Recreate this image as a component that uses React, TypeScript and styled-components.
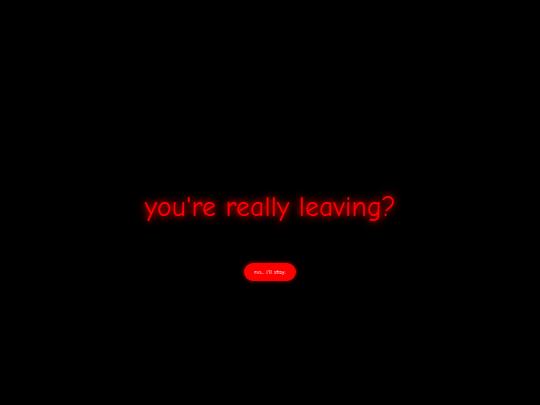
import styled, { createGlobalStyle } from 'styled-components'

const GlobalStyle = createGlobalStyle`
  html, body {
    margin: 0;
    padding: 0;
    background: #000;
  }
`

const Page = styled.div`
  width: 540px;
  height: 405px;
  background: #000;
  display: flex;
  flex-direction: column;
  align-items: center;
  justify-content: center;
  font-family: "Comic Sans MS", "Comic Neue", "DejaVu Sans", sans-serif;
`

const Title = styled.h1`
  margin: 67px 0 0;
  color: #ff0000;
  font-size: 27.5px;
  font-weight: 400;
  letter-spacing: 0.2px;
  text-shadow: 0 0 6px #ff0000, 0 0 12px rgba(255, 0, 0, 0.6);
`

const StayButton = styled.button`
  margin-top: 40px;
  height: 18px;
  padding: 0 10px;
  border: none;
  border-radius: 9px;
  background: #ff0000;
  color: #fff;
  font-family: inherit;
  font-size: 6.5px;
  cursor: pointer;
  box-shadow: 0 0 4px rgba(255, 0, 0, 0.6);
`

export default function App() {
  return (
    <>
      <GlobalStyle />
      <Page>
        <Title>you're really leaving?</Title>
        <StayButton>no... i'll stay.</StayButton>
      </Page>
    </>
  )
}
